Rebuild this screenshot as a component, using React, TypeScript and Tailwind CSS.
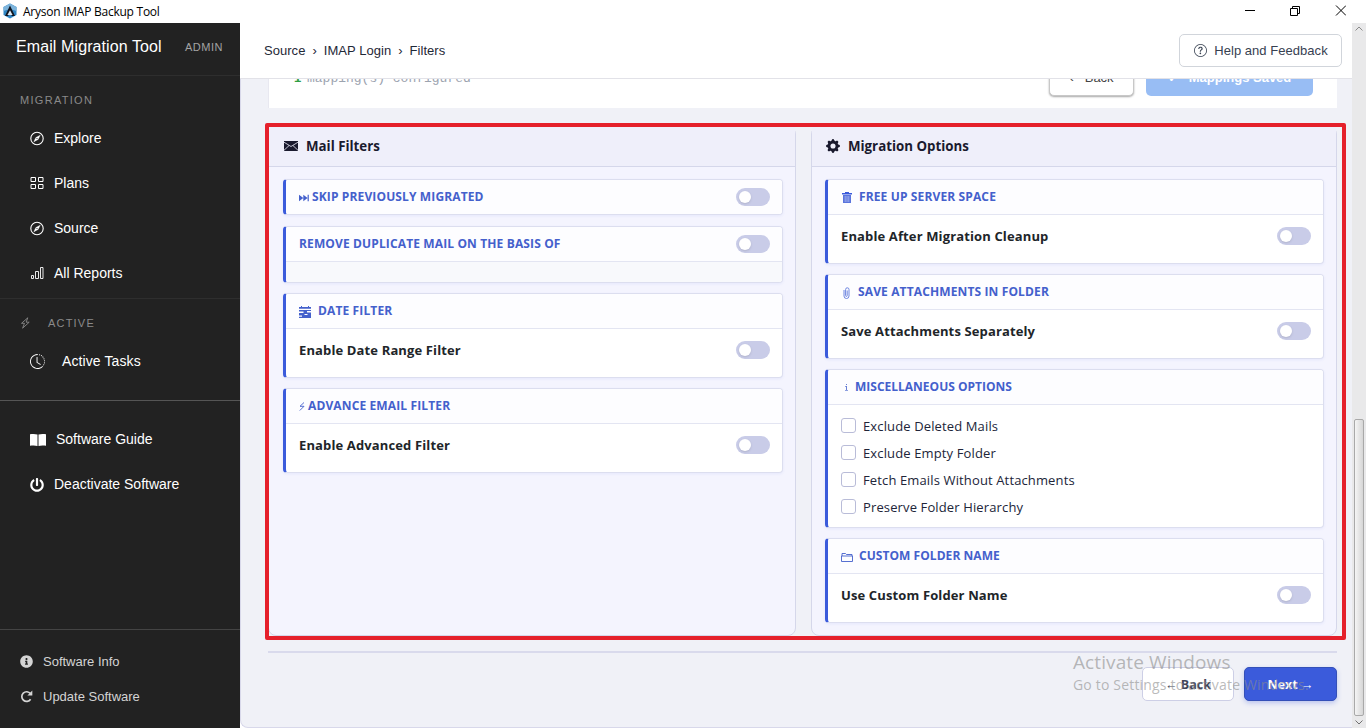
import type { ReactNode } from "react";
import { BsClockHistory, BsGearFill, BsQuestionCircle } from "react-icons/bs";
import { FaInfoCircle, FaPowerOff } from "react-icons/fa";

function LogoIcon() {
  return (
    <svg width="14" height="16" viewBox="0 0 14 16" className="mb-px shrink-0">
      <path d="M7 0.5 13.5 4v8L7 15.5 0.5 12V4z" fill="#2f86c4" />
      <path d="M7 0.5 13.5 4v4L7 6 0.5 8V4z" fill="#7db4dc" />
      <path d="M7 2.5 12 13H8.8L7 9.6 5.2 13H2z" fill="#10151f" />
      <path d="M7 7.2 9.6 12H4.4z" fill="#dfe9f2" />
    </svg>
  );
}

function CompassIcon() {
  return (
    <svg width="15" height="15" viewBox="0 0 15 15" fill="none" stroke="currentColor" className="shrink-0">
      <circle cx="7" cy="7.5" r="6.2" strokeWidth="1.1" />
      <path d="M10.4 4.1 8.2 8.6 3.6 10.9 5.8 6.4z" fill="currentColor" strokeWidth="0.2" />
      <circle cx="7" cy="7.5" r="0.6" fill="#222" stroke="none" />
    </svg>
  );
}

function GridIcon() {
  return (
    <svg width="14" height="14" viewBox="0 0 14 14" fill="none" stroke="currentColor" className="mb-px shrink-0">
      <path d="M1 1.5h4.5v4H1zM8.5 1.5H13v4H8.5zM1 8.5h4.5v4H1zM8.5 8.5H13v4H8.5z" />
    </svg>
  );
}

function ReportsIcon() {
  return (
    <svg width="14" height="14" viewBox="0 0 14 14" fill="none" stroke="currentColor" className="mb-px shrink-0">
      <path d="M1.5 9.5h2v3h-2zM5.5 5.5h3v7h-3zM10.5 1.5h2.5v11h-2.5z" strokeWidth=".9" />
    </svg>
  );
}

function BoltIcon() {
  return (
    <svg width="11" height="12" viewBox="0 0 11 12" fill="none" stroke="currentColor" strokeWidth=".9" className="mr-[17px] mb-px">
      <path d="M7.8.8 1.5 6.3h3L2.6 11.2 9.2 5.2H6.1z" />
    </svg>
  );
}

function BookIcon() {
  return (
    <svg width="16" height="14" viewBox="0 0 16 14" fill="currentColor" className="shrink-0">
      <path d="M0 1.3C2.5.8 5.3.8 7.5 1.6V13C5.3 12.3 2.5 12.3 0 12.8zM8.5 1.6C10.7.8 13.5.8 16 1.3v11.5c-2.5-.5-5.3-.5-7.5.2z" />
    </svg>
  );
}

function RefreshIcon() {
  return (
    <svg width="13" height="13" viewBox="0 0 13 13" fill="none" stroke="currentColor" strokeWidth="1.7" className="mb-px">
      <path d="M10.6 9.2A4.8 4.8 0 1 1 10.4 3.6" />
      <path d="M12.3.6v5H7.4z" fill="currentColor" stroke="none" />
    </svg>
  );
}

function NavItem({ icon, label, wide }: { icon: ReactNode; label: string; wide?: boolean }) {
  return (
    <a className="flex h-[45px] items-center pl-[30px] text-[14px] text-white">
      <span className="flex w-4 shrink-0">{icon}</span>
      <span className={wide ? "ml-4 tracking-[0.1px]" : "ml-2"}>{label}</span>
    </a>
  );
}

function Sidebar() {
  return (
    <aside className="flex w-60 shrink-0 flex-col bg-[#222] font-['Liberation_Sans',sans-serif]">
      <div className="flex h-[53px] items-center border-b border-[#2e2e2e] pb-1 pl-4">
        <span className="w-[169px] text-base tracking-[0.1px] text-white">Email Migration Tool</span>
        <span className="text-[11px] tracking-[0.5px] text-[#a3a3a3]">ADMIN</span>
      </div>
      <div className="flex h-10 items-center pt-2 pl-5 text-[11px] tracking-[1.3px] text-[#8a8a8a]">MIGRATION</div>
      <NavItem icon={<CompassIcon />} label="Explore" />
      <NavItem icon={<GridIcon />} label="Plans" />
      <NavItem icon={<CompassIcon />} label="Source" />
      <NavItem icon={<ReportsIcon />} label="All Reports" />
      <div className="mt-0.5 flex h-[41px] items-center border-t border-[#2e2e2e] pt-2 pl-5 text-[11px] tracking-[1.2px] text-[#8a8a8a]">
        <BoltIcon />
        ACTIVE
      </div>
      <NavItem icon={<BsClockHistory size={15} />} label="Active Tasks" wide />
      <div className="my-4 h-px bg-[#555]" />
      <a className="flex h-[45px] items-center gap-[10px] pl-[30px] text-[14px] text-white">
        <BookIcon />
        Software Guide
      </a>
      <NavItem icon={<FaPowerOff size={14} />} label="Deactivate Software" />
      <div className="mt-auto border-t border-[#444] pt-[14px] pb-[14px] text-[13px] text-[#d4d4d4]">
        <a className="flex h-[35px] items-center gap-[10px] pl-5">
          <FaInfoCircle size={13} />
          Software Info
        </a>
        <a className="flex h-[35px] items-center gap-[10px] pl-5">
          <RefreshIcon />
          Update Software
        </a>
      </div>
    </aside>
  );
}

function Toggle() {
  return (
    <span className="flex h-[18px] w-[34px] shrink-0 items-center rounded-full bg-[#c9cce8] pl-[3px]">
      <span className="size-3 rounded-full bg-white shadow-sm" />
    </span>
  );
}

type CardProps = {
  icon?: ReactNode;
  title: string;
  titleClass?: string;
  headToggle?: boolean;
  children?: ReactNode;
};

function Card({ icon, title, titleClass = "tracking-[0.13px]", headToggle, children }: CardProps) {
  return (
    <section className="overflow-hidden rounded-[4px] border border-l-[3px] border-[#dcdeef] border-l-[#3b5bdb] bg-white shadow-[0_1px_3px_rgba(59,91,219,0.08)]">
      <div className="flex h-[34px] items-center bg-[#fdfdff] pr-3 pl-[13px] text-[12px] font-bold text-[#4460cc]">
        {icon}
        <span className={titleClass}>{title}</span>
        {headToggle && (
          <span className="ml-auto">
            <Toggle />
          </span>
        )}
      </div>
      {children && <div className="border-t border-[#e3e5f2]">{children}</div>}
    </section>
  );
}

function ToggleRow({ label }: { label: string }) {
  return (
    <div className="flex h-12 items-center justify-between pr-3 pb-[6px] pl-[13px] text-[13px] font-bold tracking-[0.13px] text-[#212529]">
      <span className="pt-0.5">{label}</span>
      <Toggle />
    </div>
  );
}

function Panel({ icon, title, children }: { icon: ReactNode; title: string; children: ReactNode }) {
  return (
    <div className="flex flex-col rounded-lg border border-[#d5d7ea] bg-[#f4f4fe]">
      <div className="flex h-10 items-center border-b border-[#d5d7ea] bg-[#efeffa] pl-[14px] text-[13.3px] font-bold text-[#1a1a2e]">
        {icon}
        {title}
      </div>
      {children}
    </div>
  );
}

const miscOptions = [
  "Exclude Deleted Mails",
  "Exclude Empty Folder",
  "Fetch Emails Without Attachments",
  "Preserve Folder Hierarchy",
];

function MailFilters() {
  return (
    <Panel
      title="Mail Filters"
      icon={
        <svg width="14" height="10" viewBox="0 0 14 10" fill="currentColor" className="mr-2 mb-px ml-px">
          <path d="M0 0h14v10H0z" />
          <path d="M0 1.2 7 5.5 14 1.2M0 9.3 5 4.6M14 9.3 9 4.6" fill="none" stroke="#efeffa" strokeWidth=".8" />
        </svg>
      }
    >
      <div className="flex flex-col gap-[10px] pt-3 pr-3 pl-[14px]">
        <div className="pb-px">
          <Card
            title="SKIP PREVIOUSLY MIGRATED"
            headToggle
            icon={
              <svg width="10" height="8" viewBox="0 0 10 8" fill="currentColor" className="mt-px mr-[3px]">
                <path d="M0 .8l4.3 3.2L0 7.2zM4.3.8l4.3 3.2-4.3 3.2zM8.6.8h1.2v6.4H8.6z" />
              </svg>
            }
          />
        </div>
        <Card title="REMOVE DUPLICATE MAIL ON THE BASIS OF" headToggle>
          <div className="h-5 bg-[#f8f9fc]" />
        </Card>
        <Card
          title="DATE FILTER"
          icon={
            <svg width="12" height="12" viewBox="0 0 12 12" className="mt-px mr-[7px]" fill="currentColor">
              <path d="M0 1h2V0h1v1h6V0h1v1h2v1.8H0zM0 4h12v1H8v1.4h4V12H0v-1.2h3V9.4H0V7h4.5V5.6H0z" />
              <path d="M5.5 8h3v1h-3z" fill="#fff" />
            </svg>
          }
        >
          <ToggleRow label="Enable Date Range Filter" />
        </Card>
        <Card
          title="ADVANCE EMAIL FILTER"
          icon={
            <svg width="6" height="9" viewBox="0 0 6 9" className="mt-px mr-[3px]" fill="none" stroke="currentColor" strokeWidth=".9">
              <path d="M5 .5 1 4.3h4L.8 8.5" />
            </svg>
          }
        >
          <ToggleRow label="Enable Advanced Filter" />
        </Card>
      </div>
    </Panel>
  );
}

function MigrationOptions() {
  return (
    <Panel title="Migration Options" icon={<BsGearFill size={14} className="mr-2 mb-px" />}>
      <div className="flex flex-col gap-[10px] pt-3 pr-3 pl-[13px]">
        <Card
          title="FREE UP SERVER SPACE"
          icon={
            <svg width="10" height="11" viewBox="0 0 10 11" className="mt-px mr-[7px] ml-px">
              <path d="M0 1h3V0h4v1h3v1.6H0z" fill="#3b5bdb" />
              <path d="M1 3h8v8H1z" fill="#5a74dd" />
              <path d="M3.2 4v6M5 4v6M6.8 4v6" stroke="#b9c4f2" strokeWidth=".7" />
            </svg>
          }
        >
          <ToggleRow label="Enable After Migration Cleanup" />
        </Card>
        <Card
          title="SAVE ATTACHMENTS IN FOLDER"
          icon={
            <svg width="7" height="12" viewBox="0 0 7 12" className="mt-px mr-2 ml-[2px]" fill="none" stroke="#6f86e0">
              <path d="M1 3v6a2.5 2.5 0 0 0 5 0V2.5a1.7 1.7 0 0 0-3.4 0V8.6a.8.8 0 0 0 1.6 0V3.5" />
            </svg>
          }
        >
          <ToggleRow label="Save Attachments Separately" />
        </Card>
        <Card
          title="MISCELLANEOUS OPTIONS"
          titleClass="tracking-normal"
          icon={
            <svg width="3" height="7" viewBox="0 0 3 7" className="mt-px mr-[7px] ml-1" fill="currentColor">
              <path d="M1 0h1v1H1zM0 2h2v4h1v.8H0V6h1V2.8H0z" opacity=".8" />
            </svg>
          }
        >
          <div className="py-[7px] pl-[13px] text-[13px] tracking-[0.13px] text-[#212539]">
            {miscOptions.map((option) => (
              <label key={option} className="flex h-[27px] items-center gap-[7px]">
                <span className="size-[15px] rounded-[3px] border border-[#b9bcd8] bg-white" />
                <span className="pt-0.5">{option}</span>
              </label>
            ))}
          </div>
        </Card>
        <Card
          title="CUSTOM FOLDER NAME"
          titleClass="tracking-[0.05px]"
          icon={
            <svg width="12" height="9" viewBox="0 0 12 9" className="mt-[3px] mr-[6px]" fill="none" stroke="currentColor">
              <path d="M1 3V.5h3.5l1 1H11V3M.5 3h11v5.5H.5z" strokeWidth=".9" />
            </svg>
          }
        >
          <ToggleRow label="Use Custom Folder Name" />
        </Card>
      </div>
    </Panel>
  );
}

function TitleBar() {
  return (
    <div className="flex h-[23px] shrink-0 items-center bg-white pl-[3px] font-['Open_Sans',sans-serif] text-[12px] text-black">
      <LogoIcon />
      <span className="ml-[6px] tracking-[-0.25px]">Aryson IMAP Backup Tool</span>
      <svg width="102" height="12" viewBox="0 0 102 12" className="mr-5 mb-[2px] ml-auto" fill="none" stroke="#000">
        <path d="M1 5.5h10M46.5 3.5h7v7h-7zM48.5 3.5v-2h7v7h-2M92 .5l10 10M102 .5 92 10.5" />
      </svg>
    </div>
  );
}

function Header() {
  return (
    <header className="flex h-14 shrink-0 items-center border-b border-[#e2e2e8] bg-white pr-[10px] pl-6 font-['Liberation_Sans',sans-serif] text-[13px] tracking-[0.04px] text-[#1f2937]">
      <nav className="flex gap-[7px]">
        <span>Source</span>
        <span>›</span>
        <span>IMAP Login</span>
        <span>›</span>
        <span>Filters</span>
      </nav>
      <button className="ml-auto flex h-[33px] w-[163px] items-center justify-center gap-[7px] rounded-[5px] border border-[#d1d5db] pl-px text-[#374151]">
        <BsQuestionCircle size={13} />
        Help and Feedback
      </button>
    </header>
  );
}

function Scrollbar() {
  return (
    <div className="flex w-[14px] shrink-0 flex-col items-center bg-[#e9e9ea]">
      <svg width="8" height="5" viewBox="0 0 8 5" className="mt-[3px]" fill="none" stroke="#8a8a8a">
        <path d="M.5 4.5 4 1l3.5 3.5" />
      </svg>
      <div className="mt-auto h-[297px] w-[10px] rounded-[2px] border border-[#a9a9a9] bg-linear-to-r from-[#f5f5f5] to-[#d6d6d6]" />
      <svg width="8" height="5" viewBox="0 0 8 5" className="mt-[4px] mb-[3px]" fill="none" stroke="#707070">
        <path d="M.5.5 4 4 7.5.5" />
      </svg>
    </div>
  );
}

export default function App() {
  return (
    <div className="relative flex h-[728px] w-[1366px] flex-col overflow-hidden bg-white font-['Open_Sans','Noto_Sans',sans-serif]">
      <TitleBar />
      <div className="flex min-h-0 flex-1">
        <Sidebar />
        <div className="flex w-[1112px] flex-col">
          <Header />
          <main className="flex flex-1 flex-col overflow-hidden rounded-bl-lg border-b border-l border-[#d8d8ea] bg-[#f0f1f7] pr-[15px] pl-[27px]">
            {/* mapping footer, scrolled mostly out of view */}
            <div className="-mt-[31px] flex h-[60px] shrink-0 items-end border-l border-[#e8e8f0] bg-white pb-3 pl-[25px] font-['Liberation_Mono',monospace] text-[13px] text-[#9ca3af]">
              <span className="mb-[8px] flex items-baseline gap-[6px]">
                <span className="w-[7px] font-['Liberation_Sans',sans-serif] font-bold text-[#2f9e44]">1</span>
                mapping(s) configured
              </span>
              <div className="mr-6 ml-auto flex gap-3 font-['Liberation_Sans',sans-serif] text-[13px] font-bold">
                <div className="flex h-[34px] w-[85px] items-center justify-center gap-[11px] rounded-[5px] border border-[#c8c8c8] bg-white pb-0.5 font-normal text-[#444] shadow-[0_1px_2px_rgba(0,0,0,0.35)]">
                  <span>‹</span> Back
                </div>
                <div className="flex h-[34px] w-[167px] items-center justify-center gap-[10px] rounded-[5px] bg-[#98bdf4] pb-0.5 text-white">
                  <span>✓</span> Mappings Saved
                </div>
              </div>
            </div>

            <div className="mt-[18px] grid h-[510px] shrink-0 grid-cols-[528px_526px] gap-[15px]">
              <MailFilters />
              <MigrationOptions />
            </div>

            <div className="mt-[15px] flex justify-end gap-[10px] border-t-2 border-[#d9daec] pt-[14px] text-[12.5px] font-bold">
              <button className="h-[34px] w-[92px] rounded-[5px] border border-[#cdcfe6] bg-white pt-[3px] text-[#3f4558]">← Back</button>
              <button className="h-[34px] w-[93px] rounded-[5px] border border-[#3450b8] bg-[#3b5bdb] pt-[3px] text-white shadow-[0_2px_5px_rgba(59,91,219,0.3)]">
                Next →
              </button>
            </div>
          </main>
        </div>
        <Scrollbar />
      </div>

      <div className="pointer-events-none absolute top-[123px] left-[265px] h-[517px] w-[1081px] rounded-[2px] border-4 border-[#e5202b]" />
      <div className="pointer-events-none absolute top-[650px] left-[1073px] text-[#8c8c8c]/60">
        <p className="text-[19px] leading-6 tracking-[0.1px]">Activate Windows</p>
        <p className="pt-px text-[14px] leading-5 tracking-[0.18px]">Go to Settings to activate Windows.</p>
      </div>
    </div>
  );
}
